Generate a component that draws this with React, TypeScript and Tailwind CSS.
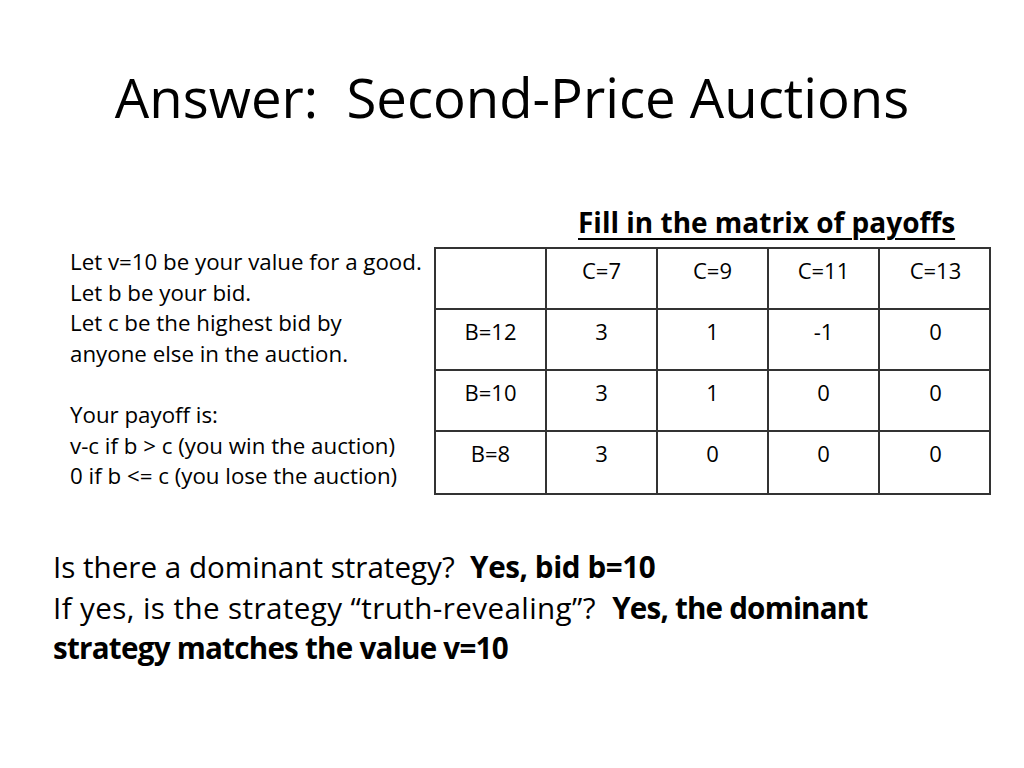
import React from "react";

const header = ["", "C=7", "C=9", "C=11", "C=13"];
const rows = [
  ["B=12", "3", "1", "-1", "0"],
  ["B=10", "3", "1", "0", "0"],
  ["B=8", "3", "0", "0", "0"],
];

function Row({ cells, last }: { cells: string[]; last?: boolean }) {
  return (
    <div className={`grid grid-cols-[111px_111px_111px_111px_111px] h-[61px] ${last ? "" : "border-b-2 border-[#333]"}`}>
      {cells.map((c, i) => (
        <div
          key={i}
          className={`text-center pt-[6px] leading-[30px] text-[22px] ${i < 4 ? "border-r-2 border-[#333]" : ""}`}
        >
          {c}
        </div>
      ))}
    </div>
  );
}

export default function App() {
  return (
    <div
      className="w-[1024px] h-[768px] bg-white text-black relative overflow-hidden"
      style={{ fontFamily: '"Open Sans", "Noto Sans", sans-serif' }}
    >
      <h1 className="pt-[63px] h-[140px] text-center text-[54.5px] leading-[68px] whitespace-pre">
        {"Answer:  Second-Price Auctions"}
      </h1>
      <div className="grid grid-cols-[435px_557px] grid-rows-[107px_auto] pl-0">
        <div />
        <div className="pl-[143px] pt-[67px]">
          <span className="font-bold text-[28px] leading-[30px] tracking-[0px] underline underline-offset-[5px] decoration-2">
            Fill in the matrix of payoffs
          </span>
        </div>
        <div className="pl-[70px] pt-0 text-[22.3px] leading-[30.6px] whitespace-pre">
          {"Let v=10 be your value for a good.\nLet b be your bid.\nLet c be the highest bid by\nanyone else in the auction.\n\nYour payoff is:\nv-c if b > c (you win the auction)\n0 if b <= c (you lose the auction)"}
        </div>
        <div className="w-[557px] border-2 border-[#333] -ml-[1px]">
          <Row cells={header} />
          {rows.map((r, i) => (
            <Row key={i} cells={r} last={i === rows.length - 1} />
          ))}
        </div>
      </div>
      <div className="pl-[53px] pt-[52px] text-[29.6px] leading-[40.5px] w-[900px]">
        <div className="whitespace-pre">
          {"Is there a dominant strategy?  "}
          <b className="tracking-[-0.4px]">Yes, bid b=10</b>
        </div>
        <div>
          <span className="whitespace-pre tracking-[0.4px]">{"If yes, is the strategy \u201ctruth-revealing\u201d?  "}</span>
          <b className="tracking-[-0.8px]">Yes, the dominant</b>
        </div>
        <div>
          <b className="tracking-[-0.75px]">strategy matches the value v=10</b>
        </div>
      </div>
    </div>
  );
}
